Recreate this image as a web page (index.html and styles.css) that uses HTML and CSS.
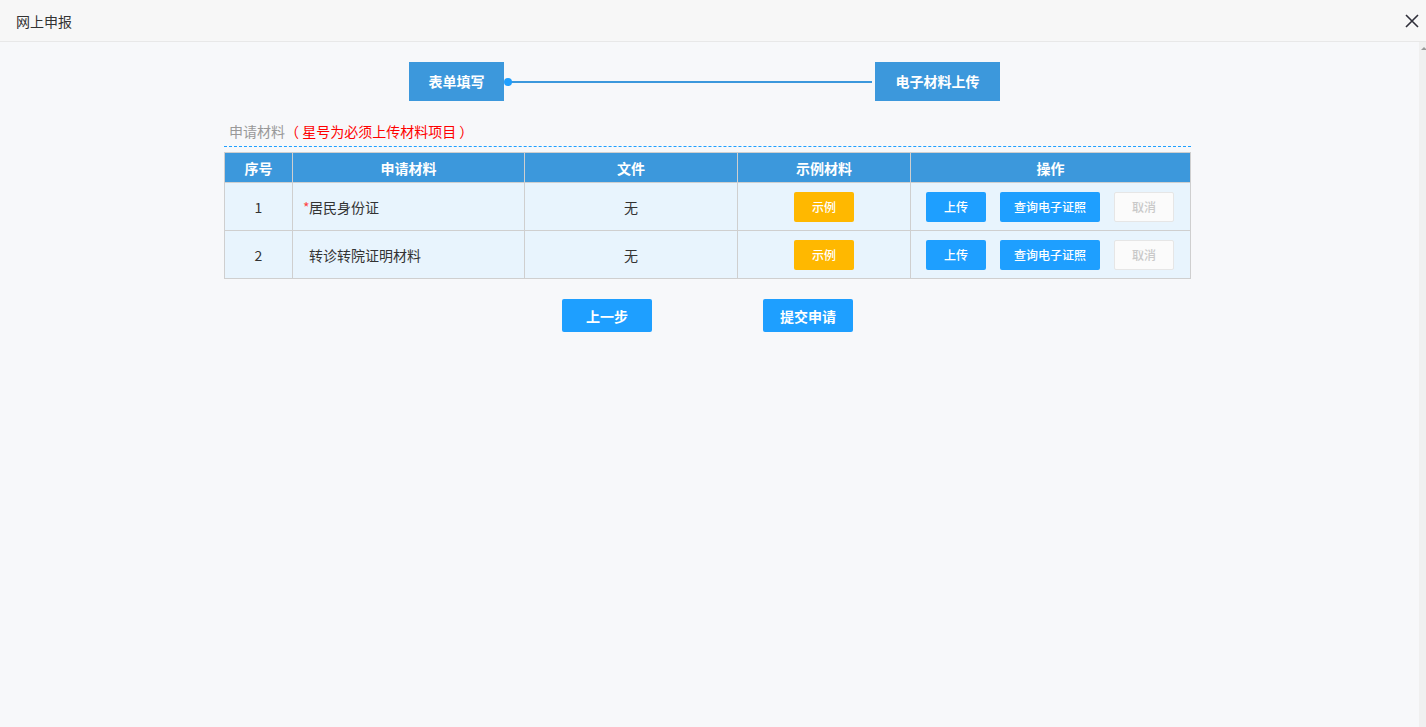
FILE: index.html
```
<!DOCTYPE html>
<html>
  <head>
    <meta charset="utf-8">
    <title>网上申报</title>
    <link rel="stylesheet" href="styles.css">
  </head>
  <body>
    <div class="dialog">
      <div class="dialog-header">
        <span class="dialog-title">网上申报</span>
        <button class="close-btn" title="关闭">
          <svg width="14" height="14" viewBox="0 0 14 14">
            <path d="M1 1 L13 13 M13 1 L1 13" stroke="#2f2f3a" stroke-width="1.6" fill="none"/>
          </svg>
        </button>
      </div>
      <div class="dialog-body">
        <div class="content">
          <div class="steps">
            <div class="step first">表单填写</div>
            <div class="step-line"><span class="dot"></span></div>
            <div class="step last">电子材料上传</div>
          </div>

          <div class="section">
            <div class="section-title">申请材料<span class="hint">（ 星号为必须上传材料项目 ）</span></div>
            <table class="material-table">
              <thead>
                <tr>
                  <th class="col-no">序号</th>
                  <th class="col-name">申请材料</th>
                  <th class="col-file">文件</th>
                  <th class="col-sample">示例材料</th>
                  <th>操作</th>
                </tr>
              </thead>
              <tbody>
                <tr>
                  <td class="center">1</td>
                  <td class="name"><span class="star">*</span>居民身份证</td>
                  <td class="center">无</td>
                  <td class="center"><button class="btn btn-warm">示例</button></td>
                  <td>
                    <div class="ops">
                      <button class="btn btn-blue">上传</button>
                      <button class="btn btn-blue wide">查询电子证照</button>
                      <button class="btn btn-disabled">取消</button>
                    </div>
                  </td>
                </tr>
                <tr>
                  <td class="center">2</td>
                  <td class="name"><span class="star"></span>转诊转院证明材料</td>
                  <td class="center">无</td>
                  <td class="center"><button class="btn btn-warm">示例</button></td>
                  <td>
                    <div class="ops">
                      <button class="btn btn-blue">上传</button>
                      <button class="btn btn-blue wide">查询电子证照</button>
                      <button class="btn btn-disabled">取消</button>
                    </div>
                  </td>
                </tr>
              </tbody>
            </table>
          </div>

          <div class="actions">
            <button class="btn btn-blue big">上一步</button>
            <button class="btn btn-blue big">提交申请</button>
          </div>
        </div>
        <div class="scroll-track"><span class="arrow"></span></div>
      </div>
    </div>
  </body>
</html>
```

FILE: styles.css
```
html, body {
  margin: 0;
  padding: 0;
  height: 100%;
}

body {
  font-family: "Noto Sans CJK SC", "Liberation Sans", sans-serif;
  color: #333;
  background-color: #f7f8fa;
}

.dialog {
  display: flex;
  flex-direction: column;
  height: 100%;
}

.dialog-header {
  height: 41px;
  border-bottom: 1px solid #e8e8e8;
  background-color: #f7f7f7;
  display: flex;
  align-items: center;
  justify-content: space-between;
  padding: 0 7px 0 16px;
}

.dialog-title {
  font-size: 14px;
  color: #333;
}

.close-btn {
  background: none;
  border: none;
  padding: 0;
  width: 14px;
  height: 14px;
  display: flex;
  cursor: pointer;
}

.dialog-body {
  flex: 1;
  display: flex;
}

.content {
  flex: 1;
  display: flex;
  flex-direction: column;
  align-items: center;
  padding-top: 20px;
}

/* steps */
.steps {
  display: flex;
  align-items: center;
  width: 591px;
  margin-left: -10px;
}

.step {
  height: 39px;
  line-height: 39px;
  background-color: #3c98dc;
  color: #fff;
  font-size: 14px;
  font-weight: bold;
  text-align: center;
}

.step.first { width: 95px; }
.step.last { width: 125px; }

.step-line {
  flex: 1;
  height: 2px;
  background-color: #3c98dc;
  margin: 0 3px 0 4px;
  position: relative;
}

.step-line .dot {
  position: absolute;
  left: -4px;
  top: -3px;
  width: 8px;
  height: 8px;
  border-radius: 50%;
  background-color: #1e9fff;
}

/* material table */
.section {
  width: 967px;
  margin-top: 20px;
  margin-left: -4px;
}

.section-title {
  font-size: 14px;
  color: #999;
  padding: 0 0 4px 5px;
  border-bottom: 1px dashed #1e9fff;
  line-height: 21px;
}

.hint {
  color: #ff0000;
}

.material-table {
  width: 100%;
  margin-top: 5px;
  border-collapse: collapse;
  font-size: 14px;
}

.material-table th,
.material-table td {
  border: 1px solid #cfcfcf;
}

.material-table th {
  background-color: #3c98dc;
  color: #fff;
  height: 29px;
  font-size: 14px;
  font-weight: bold;
  padding: 0;
}

.material-table td {
  background-color: #e8f4fd;
  height: 47px;
  padding: 0;
}

.col-no { width: 67px; }
.col-name { width: 231px; }
.col-file { width: 212px; }
.col-sample { width: 172px; }

.center {
  text-align: center;
}

.name {
  padding-left: 10px !important;
}

.star {
  color: #ff4444;
  display: inline-block;
  width: 6px;
}

.ops {
  display: flex;
  align-items: center;
  gap: 14px;
  padding-left: 15px;
}

/* buttons */
.btn {
  border: none;
  height: 30px;
  width: 60px;
  border-radius: 2px;
  color: #fff;
  font-family: inherit;
  font-size: 12px;
  font-weight: 500;
  cursor: pointer;
  padding: 0;
  vertical-align: middle;
}

.btn-warm {
  background-color: #ffb800;
}

.btn-blue {
  background-color: #1e9fff;
}

.btn-blue.wide {
  width: 100px;
}

.btn-disabled {
  background-color: #fbfbfb;
  border: 1px solid #e6e6e6;
  color: #c9c9c9;
}

.actions {
  display: flex;
  gap: 111px;
  margin-top: 20px;
  margin-left: -4px;
}

.btn.big {
  width: 90px;
  height: 33px;
  font-size: 14px;
  font-weight: bold;
}

/* right scroll track */
.scroll-track {
  width: 7px;
  background-color: #f0f0f0;
  position: relative;
}

.scroll-track .arrow {
  position: absolute;
  top: 5px;
  left: 2px;
  width: 0;
  height: 0;
  border-left: 3px solid transparent;
  border-right: 3px solid transparent;
  border-bottom: 3px solid #999;
}
```
